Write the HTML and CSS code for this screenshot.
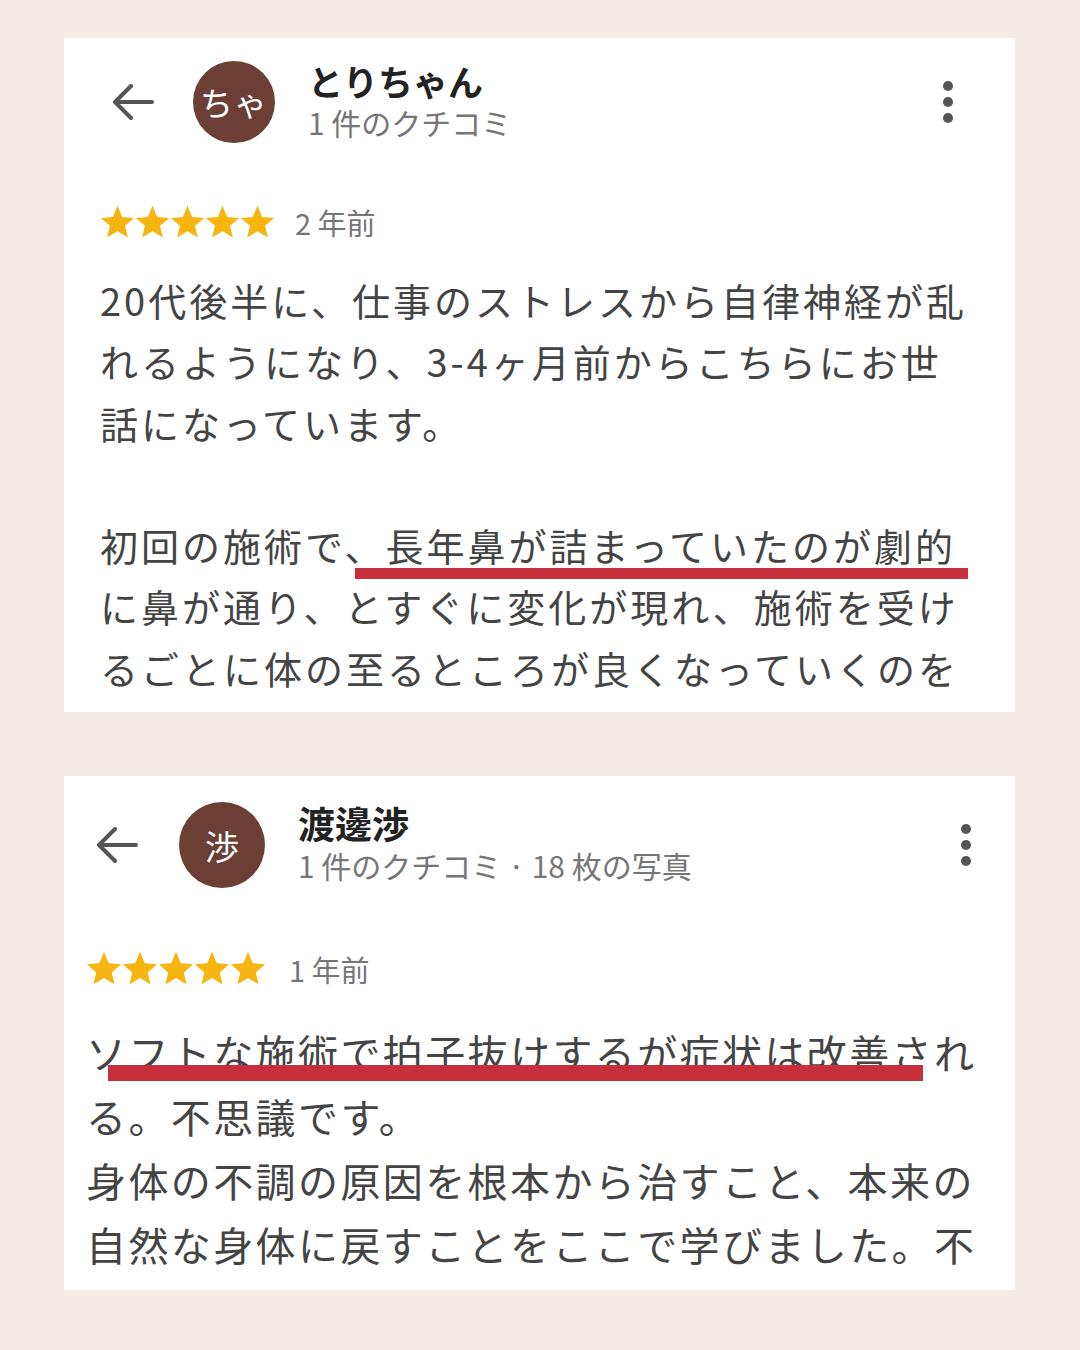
FILE: index.html
```html
<!DOCTYPE html>
<html lang="ja">
<head>
  <meta charset="UTF-8"/>
  <meta name="viewport" content="width=device-width,initial-scale=1"/>
  <title>クチコミ</title>
  <link rel="stylesheet" href="styles.css">
</head>
<body>
  <svg width="0" height="0" style="position:absolute">
    <defs>
      <symbol id="star" viewBox="1.5 1.5 21 21">
        <path d="M12 17.27L18.18 21l-1.64-7.03L22 9.24l-7.19-.61L12 2 9.19 8.63 2 9.24l5.46 4.73L5.82 21z"/>
      </symbol>
    </defs>
  </svg>

  <div class="page">
    <!-- review 1 -->
    <div class="review review-one">
      <div class="review-head">
        <svg class="back" viewBox="0 0 44 36"><path d="M42 18H5M21 2L5 18l16 16"/></svg>
        <div class="avatar">ちゃ</div>
        <div class="who">
          <div class="name">とりちゃん</div>
          <div class="meta">1 件のクチコミ</div>
        </div>
        <div class="more"><span></span><span></span><span></span></div>
      </div>
      <div class="rating">
        <div class="stars">
          <svg><use href="#star"/></svg><svg><use href="#star"/></svg><svg><use href="#star"/></svg><svg><use href="#star"/></svg><svg><use href="#star"/></svg>
        </div>
        <span class="when">2 年前</span>
      </div>
      <div class="body">
        <p>20代後半に、仕事のストレスから自律神経が乱れるようになり、3-4ヶ月前からこちらにお世話になっています。</p>
        <p class="gap">初回の施術で、<span class="mark">長年鼻が詰まっていたのが劇的</span>に鼻が通り、とすぐに変化が現れ、施術を受けるごとに体の至るところが良くなっていくのを実感しています。</p>
      </div>
    </div>

    <!-- review 2 -->
    <div class="review review-two">
      <div class="review-head">
        <svg class="back" viewBox="0 0 44 36"><path d="M42 18H5M21 2L5 18l16 16"/></svg>
        <div class="avatar">渉</div>
        <div class="who">
          <div class="name">渡邊渉</div>
          <div class="meta">1 件のクチコミ · 18 枚の写真</div>
        </div>
        <div class="more"><span></span><span></span><span></span></div>
      </div>
      <div class="rating">
        <div class="stars">
          <svg><use href="#star"/></svg><svg><use href="#star"/></svg><svg><use href="#star"/></svg><svg><use href="#star"/></svg><svg><use href="#star"/></svg>
        </div>
        <span class="when">1 年前</span>
      </div>
      <div class="body">
        <p><span class="mark">ソフトな施術で拍子抜けするが症状は改善さ</span>れる。不思議です。</p>
        <p>身体の不調の原因を根本から治すこと、本来の自然な身体に戻すことをここで学びました。不調の時は身体の声を聞き、心と身体を整えていきます。</p>
      </div>
    </div>
  </div>
</body>
</html>
```

FILE: styles.css
```css
:root {
  --bg:      #f4ece4;
  --brown:   #6b3f33;
  --star:    #f6b511;
  --text:    #444;
  --meta:    #767676;
  --marker:  #c62f3c;
}
body {margin:0;background:var(--bg);font-family:"Noto Sans CJK JP","Noto Sans",sans-serif;color:var(--text)}
.page {display:flex;flex-direction:column;gap:64px;padding:38px 0 0 64px}
.review {width:951px;background:#fff;overflow:hidden;box-sizing:border-box}
.review-one {height:674px;padding:23px 0 0 36px}
.review-two {height:514px;padding:26px 0 0 22px}

.review-head {display:flex;align-items:center}
.back {width:44px;height:36px;fill:none;stroke:#555;stroke-width:4;stroke-linecap:round;stroke-linejoin:round}
.avatar {border-radius:50%;background:var(--brown);color:#fff;display:flex;align-items:center;justify-content:center;flex-shrink:0}
.who {display:flex;flex-direction:column}
.name {font-weight:700;color:#222;line-height:40px}
.meta {font-size:30px;color:var(--meta)}
.more {margin-left:auto;display:flex;flex-direction:column;gap:6px}
.more span {width:10px;height:10px;border-radius:50%;background:#555}

.review-one .back {margin-left:10px}
.review-one .avatar {width:82px;height:82px;margin-left:39px;font-size:33px;letter-spacing:1px}
.review-one .who {margin-left:33px}
.review-one .name {font-size:35px}
.review-one .meta {line-height:42px}
.review-one .more {margin-right:62px}

.review-two .back {margin-left:8px}
.review-two .avatar {width:86px;height:86px;margin-left:41px;font-size:34px}
.review-two .who {margin-left:33px}
.review-two .name {font-size:37px}
.review-two .meta {line-height:44px}
.review-two .more {margin-right:44px}

.rating {display:flex;align-items:center;height:38px}
.stars {display:flex;fill:var(--star)}
.stars svg {width:35px;height:35px}
.when {font-size:29px;color:var(--meta);margin-left:20px}
.review-one .rating {margin-top:60px}
.review-two .rating {margin-top:62px}
.review-two .stars svg {width:36px;height:36px}
.review-two .when {margin-left:23px}

.body p {margin:0}
.review-one .body {margin-top:28px;width:872px;font-size:38px;line-height:61.3px;letter-spacing:3px}
.review-one .body .gap {margin-top:61.3px}
.review-two .body {margin-top:32px;width:905px;font-size:40px;line-height:64px;letter-spacing:2.4px}

.mark {position:relative}
.mark::after {content:"";position:absolute;background:var(--marker)}
.review-one .mark::after {left:-30px;right:-12px;bottom:-7px;height:11px}
.review-two .mark::after {left:22px;right:11px;bottom:0;height:16px}
```
